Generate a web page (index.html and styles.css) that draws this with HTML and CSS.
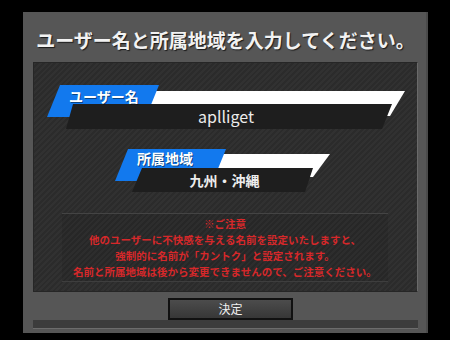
FILE: index.html
```html
<!doctype html>
<html lang="ja">
    <head>
        <meta charset="UTF-8" />
        <meta name="viewport" content="width=device-width, initial-scale=1.0" />
        <title>ユーザー登録</title>
        <link rel="stylesheet" href="styles.css">
    </head>
    <body>
        <div class="panel">
            <h1 class="title">ユーザー名と所属地域を入力してください。</h1>

            <div class="inner">
                <!-- User name -->
                <div class="field field-name">
                    <svg class="field-bg" viewBox="0 0 358 44" width="358" height="44">
                        <polygon class="bar-white" points="103,6 358,6 343,31 93,31" />
                        <polygon class="bar-blue" points="13,0 112,0 99,32 0,32" />
                        <polygon class="bar-dark" points="26,19 345,19 335,44 19,44" />
                    </svg>
                    <span class="field-label">ユーザー名</span>
                    <span class="field-value">aplliget</span>
                </div>

                <!-- Region -->
                <div class="field field-region">
                    <svg class="field-bg" viewBox="0 0 215 43" width="215" height="43">
                        <polygon class="bar-white" points="103,5 215,5 198,28 93,28" />
                        <polygon class="bar-blue" points="13,0 111,0 98,32 0,32" />
                        <polygon class="bar-dark" points="27,19 198,19 190,43 17,43" />
                    </svg>
                    <span class="field-label">所属地域</span>
                    <span class="field-value">九州・沖縄</span>
                </div>

                <div class="notice">
                    <p>※ご注意</p>
                    <p>他のユーザーに不快感を与える名前を設定いたしますと、</p>
                    <p>強制的に名前が「カントク」と設定されます。</p>
                    <p>名前と所属地域は後から変更できませんので、ご注意ください。</p>
                </div>
            </div>

            <div class="actions">
                <button class="ok-button">決定</button>
            </div>
            <div class="foot"></div>
        </div>
    </body>
</html>
```

FILE: styles.css
```css
:root {
    --panel: #565656;
    --blue: #1279ee;
    --bar-dark: #1e1e1e;
    --red: #d6282a;
}

body {
    margin: 0;
    background-color: #000;
    font-family: "Noto Sans CJK JP", "Noto Sans", sans-serif;
    width: 450px;
    height: 340px;
    overflow: hidden;
}

.panel {
    margin: 12px 0 0 23px;
    width: 405px;
    height: 321px;
    box-sizing: border-box;
    padding: 0 10px;
    background-color: var(--panel);
    display: flex;
    flex-direction: column;
    box-shadow: inset -2px 0 0 #4a4a4a;
}

.title {
    margin: 0;
    height: 50px;
    padding-top: 5px;
    box-sizing: border-box;
    display: flex;
    align-items: center;
    justify-content: center;
    font-size: 19px;
    font-weight: bold;
    color: #f2f2f2;
    white-space: nowrap;
    text-shadow: 1px 1px 1px #1a1a1a;
}

.inner {
    height: 230px;
    box-sizing: border-box;
    border: 1px solid #262626;
    border-right-color: #6a6a6a;
    background: repeating-linear-gradient(
        -45deg,
        #2b2b2b 0 2px,
        #313131 2px 4px
    );
    display: flex;
    flex-direction: column;
}

/* Slanted label + value bars */
.field {
    position: relative;
    display: flex;
    flex-direction: column;
}
.field-bg {
    position: absolute;
    top: 0;
    left: 0;
}
.bar-white {
    fill: #fff;
}
.bar-blue {
    fill: var(--blue);
}
.bar-dark {
    fill: var(--bar-dark);
}
.field-label,
.field-value {
    position: relative;
    white-space: nowrap;
}
.field-label {
    padding-left: 22px;
    font-size: 14px;
    font-weight: bold;
    color: #fff;
    text-shadow: 1px 1px 0 rgba(0, 0, 0, 0.45);
}
.field-value {
    text-align: center;
    color: #ececec;
}

.field-name {
    margin: 22px 0 0 13px;
    width: 358px;
    height: 44px;
}
.field-name .field-label {
    height: 22px;
    line-height: 22px;
}
.field-name .field-value {
    margin-top: -3px;
    height: 25px;
    line-height: 25px;
    font-size: 16px;
}

.field-region {
    margin: 20px 0 0 81px;
    width: 215px;
    height: 43px;
}
.field-region .field-label {
    height: 19px;
    line-height: 19px;
}
.field-region .field-value {
    height: 24px;
    line-height: 24px;
    padding-left: 4px;
    font-size: 14px;
    font-weight: bold;
}

.notice {
    margin: 21px 0 0 28px;
    width: 326px;
    height: 69px;
    box-sizing: border-box;
    padding-top: 2px;
    border-top: 1px solid #444;
    border-bottom: 1px solid #3e3e3e;
    background-color: rgba(0, 0, 0, 0.08);
    text-align: center;
    color: var(--red);
    font-size: 10.5px;
    font-weight: bold;
    line-height: 16px;
}
.notice p {
    margin: 0;
    white-space: nowrap;
}

.actions {
    height: 28px;
    padding-top: 3px;
    box-sizing: border-box;
}
.ok-button {
    margin-left: 135px;
    width: 125px;
    height: 22px;
    padding: 0;
    border: 2px solid #111;
    background: linear-gradient(#4c4c4c, #373737);
    color: #f0f0f0;
    font-family: inherit;
    font-size: 12px;
    line-height: 18px;
    cursor: pointer;
}

.foot {
    height: 9px;
    background-color: #3c3c3c;
    border-bottom: 1px solid #6c6c6c;
    box-sizing: border-box;
}
```
